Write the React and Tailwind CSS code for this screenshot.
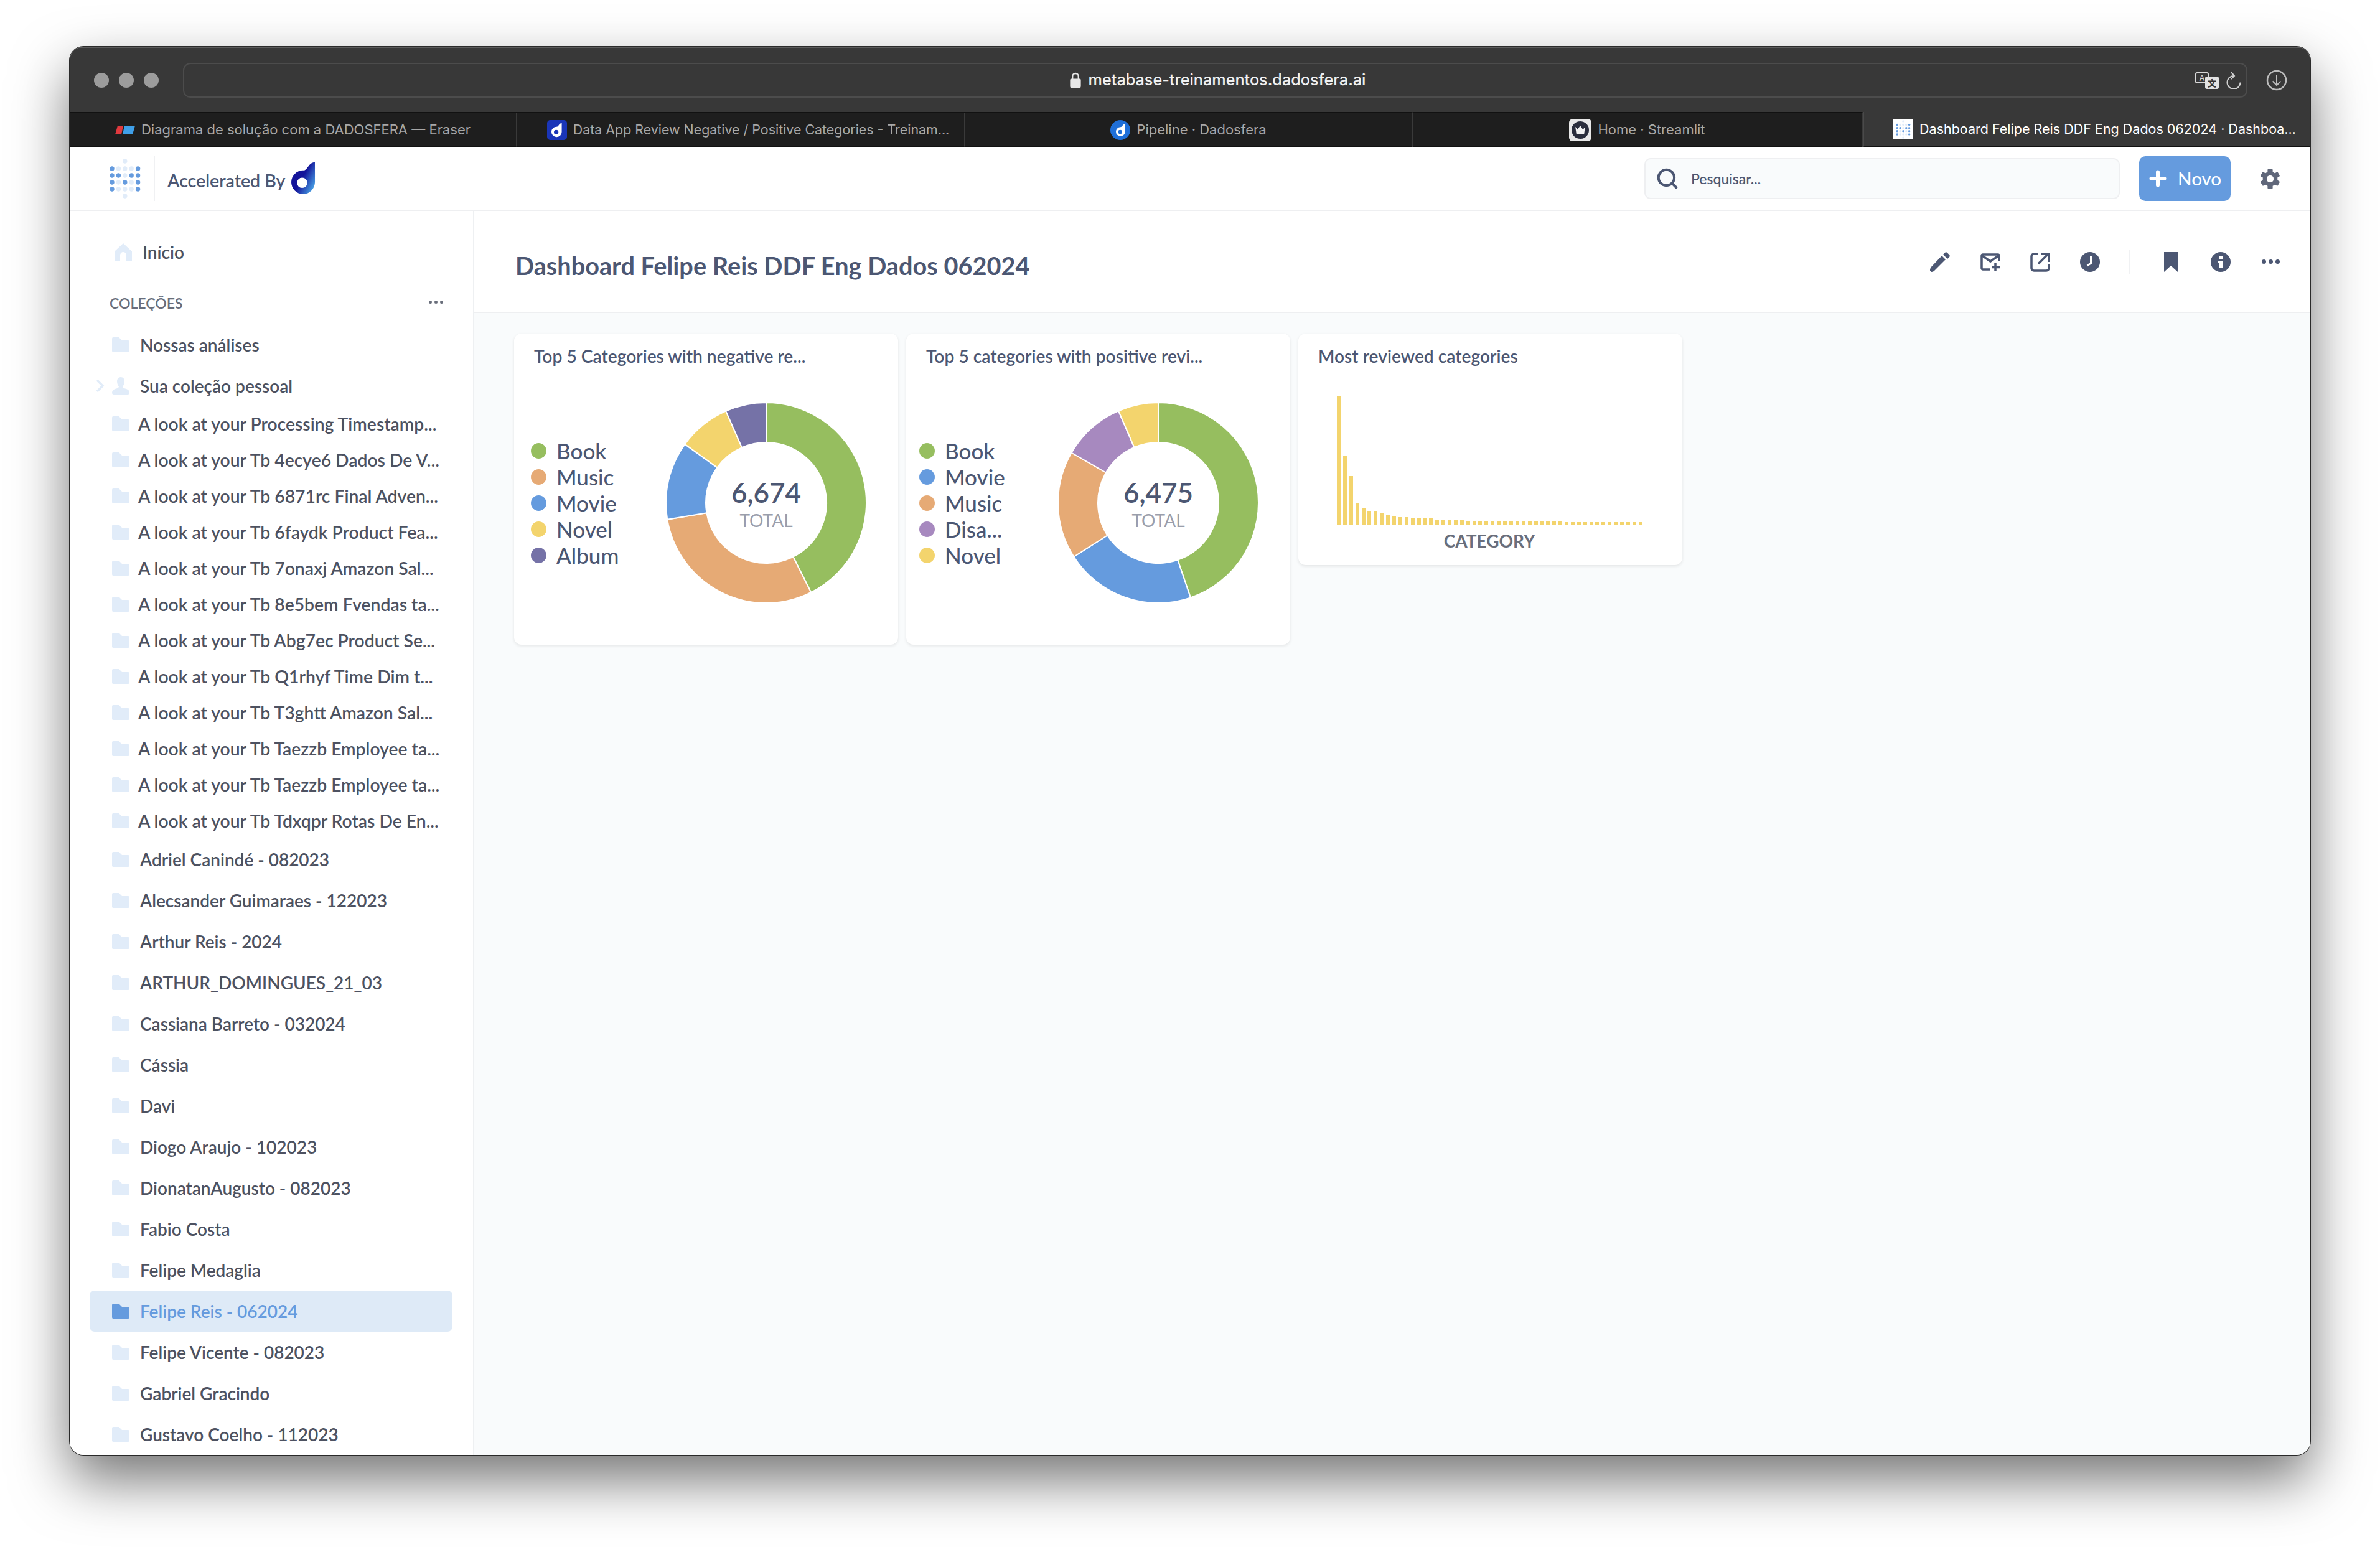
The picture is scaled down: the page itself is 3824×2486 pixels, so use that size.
import React from "react";
import { Search, Plus } from "lucide-react";

const lato = { fontFamily: "Lato, sans-serif" };
const inter = { fontFamily: "Inter, sans-serif" };

const lookRows = [
  "A look at your Processing Timestamp...",
  "A look at your Tb 4ecye6 Dados De V...",
  "A look at your Tb 6871rc Final Adven...",
  "A look at your Tb 6faydk Product Fea...",
  "A look at your Tb 7onaxj Amazon Sal...",
  "A look at your Tb 8e5bem Fvendas ta...",
  "A look at your Tb Abg7ec Product Se...",
  "A look at your Tb Q1rhyf Time Dim t...",
  "A look at your Tb T3ghtt Amazon Sal...",
  "A look at your Tb Taezzb Employee ta...",
  "A look at your Tb Taezzb Employee ta...",
  "A look at your Tb Tdxqpr Rotas De En...",
];

const people = [
  "Adriel Canindé - 082023",
  "Alecsander Guimaraes - 122023",
  "Arthur Reis - 2024",
  "ARTHUR_DOMINGUES_21_03",
  "Cassiana Barreto - 032024",
  "Cássia",
  "Davi",
  "Diogo Araujo - 102023",
  "DionatanAugusto - 082023",
  "Fabio Costa",
  "Felipe Medaglia",
  "Felipe Reis - 062024",
  "Felipe Vicente - 082023",
  "Gabriel Gracindo",
  "Gustavo Coelho - 112023",
];

const GREEN = "#96be5f";
const ORANGE = "#e6aa75";
const BLUE = "#659bde";
const YELLOW = "#f3d46d";
const PURPLE = "#7572a7";
const LILAC = "#a789bf";

const negative = [
  { name: "Book", color: GREEN, end: 153.4 },
  { name: "Music", color: ORANGE, end: 260.4 },
  { name: "Movie", color: BLUE, end: 305.8 },
  { name: "Novel", color: YELLOW, end: 336.3 },
  { name: "Album", color: PURPLE, end: 360 },
];

const positive = [
  { name: "Book", color: GREEN, end: 161.2 },
  { name: "Movie", color: BLUE, end: 237.4 },
  { name: "Music", color: ORANGE, end: 300 },
  { name: "Disa...", color: LILAC, end: 336.6 },
  { name: "Novel", color: YELLOW, end: 360 },
];

const barHeights = [
  206, 110, 78, 34, 26, 22, 22, 18, 16, 14, 12, 12,
  10, 10, 10, 10, 8, 8, 8, 8, 8,
  6, 6, 6, 6, 6, 6, 6, 6, 6, 6, 6, 6, 6, 6, 6, 6,
  4, 4, 4, 4, 4, 4, 4, 4, 4, 4, 4, 4, 4,
];

const FolderIcon = ({ active }) => (
  <svg viewBox="0 0 28 24" className={`w-[28px] h-[24px] shrink-0 ${active ? "text-[#659bde]" : "text-[#e1ecf9]"}`} fill="currentColor">
    <path d="M2 0h9l5 5h10a2 2 0 0 1 2 2v15a2 2 0 0 1-2 2H2a2 2 0 0 1-2-2V2a2 2 0 0 1 2-2z" />
  </svg>
);

// dadosfera "d" mark
const DLogo = ({ className, id, from, to, fill }) => (
  <svg viewBox="0 0 40 52" className={className}>
    {id && (
      <defs>
        <linearGradient id={id} x1="0" y1="0.2" x2="1" y2="0.9">
          <stop offset="0%" stopColor={from} />
          <stop offset="45%" stopColor={from} />
          <stop offset="100%" stopColor={to} />
        </linearGradient>
      </defs>
    )}
    <path
      fillRule="evenodd"
      fill={id ? `url(#${id})` : fill}
      d="M39 0V33A19.500 19.500 0 1 1 19.500 13.500C28 13.500 27 1 39 0ZM18 25.500a8.500 8.500 0 1 0 0 17 8.500 8.500 0 0 0 0-17Z"
    />
  </svg>
);

const dotRows = ["D...D", "DD.DD", "D.D.D", "D...D"];

const DotsLogo = ({ className }) => (
  <svg viewBox="0 0 50 64" className={className}>
    <circle cx="24.800" cy="4" r="3.700" fill="#e1ecf9" />
    <circle cx="24.800" cy="60" r="3.700" fill="#e1ecf9" />
    {dotRows.map((line, row) =>
      line.split("").map((c, col) => (
        <circle
          key={`${row}-${col}`}
          cx={4 + col * 10.4}
          cy={16 + row * 11}
          r="3.700"
          fill={c === "D" ? "#659bde" : "#e1ecf9"}
        />
      ))
    )}
  </svg>
);

const Gear = ({ className }) => (
  <svg viewBox="0 0 32 32" className={className} fill="#60677a">
    <circle cx="16" cy="16" r="11.500" />
    {[0, 60, 120].map((deg) => (
      <rect key={deg} x="12" y="0.500" width="8" height="31" rx="1.500" transform={`rotate(${deg} 16 16)`} />
    ))}
    <circle cx="16" cy="16" r="5.500" fill="#fff" />
  </svg>
);

const Donut = ({ slices, total }) => {
  const cx = 161;
  const cy = 161;
  const outer = 161;
  const inner = 97;
  const pt = (r, deg) => {
    const a = (deg * Math.PI) / 180;
    return `${(cx + r * Math.sin(a)).toFixed(2)} ${(cy - r * Math.cos(a)).toFixed(2)}`;
  };
  let start = 0;
  return (
    <div className="relative w-[322px] h-[322px] shrink-0">
      <svg viewBox="0 0 322 322" className="w-full h-full">
        {slices.map((s) => {
          const large = s.end - start > 180 ? 1 : 0;
          const d = `M${pt(outer, start)}A${outer} ${outer} 0 ${large} 1 ${pt(outer, s.end)}L${pt(inner, s.end)}A${inner} ${inner} 0 ${large} 0 ${pt(inner, start)}Z`;
          start = s.end;
          return <path key={s.name} d={d} fill={s.color} stroke="#fff" strokeWidth="2" />;
        })}
      </svg>
      <div className="absolute inset-0 flex flex-col items-center justify-center">
        <div className="text-[44px] leading-[54px] font-semibold text-[#4c5773]">{total}</div>
        <div className="text-[28px] leading-[34px] text-[#9a9eab] mt-[1px]">TOTAL</div>
      </div>
    </div>
  );
};

const DonutCard = ({ title, slices, total, legendPad }) => (
  <div className="w-[617px] h-[500px] bg-white rounded-[12px] shadow-[0_2px_5px_rgba(0,0,0,0.09)] flex flex-col">
    <div className="pl-[32px] pt-[18px] text-[28.200px] leading-[36px] font-semibold text-[#4c5773]">{title}</div>
    <div className={`flex items-start ${legendPad} mt-[113px]`}>
      <div className="flex flex-col">
        {slices.map((s) => (
          <div key={s.name} className="flex items-center h-[42px] gap-[16px] text-[35px] font-medium text-[#4c5773]">
            <span className="w-[25px] h-[25px] rounded-full shrink-0" style={{ backgroundColor: s.color }} />
            <span>{s.name}</span>
          </div>
        ))}
      </div>
    </div>
    <div className="flex justify-end pr-[51px] mt-[-266px]">
      <Donut slices={slices} total={total} />
    </div>
  </div>
);

const Tab = ({ children, active, textClass = "w-[719px] text-[22px]" }) => (
  <div
    className={`shrink-0 flex items-center justify-center gap-[10px] ${textClass} border-b-2 border-b-[#111] ${
      active ? "text-white bg-[#383838] border-l-2 border-l-[#4a4a4a]" : "text-[#a8a8a8] bg-[#1e1e1e] border-t-2 border-t-[#111] border-r-2 border-r-[#3a3a3a]"
    }`}
    style={inter}
  >
    {children}
  </div>
);

export default function App() {
  return (
    <div className="w-[3824px] h-[2486px] bg-white pt-[75px] pl-[112px] overflow-hidden" style={lato}>
      <div className="w-[3600px] h-[2263px] rounded-[22px] overflow-hidden flex flex-col bg-white shadow-[0_0_0_1px_#2a2a2a,0_40px_90px_rgba(0,0,0,0.55)]">
        {/* browser toolbar */}
        <div className="h-[105px] bg-[#383838] border-t-2 border-t-[#5b5b5b] flex items-center shrink-0">
          <div className="flex items-center gap-[16px] pl-[39px] w-[182px] shrink-0">
            <span className="w-[24px] h-[24px] rounded-full bg-[#9c9c9c]" />
            <span className="w-[24px] h-[24px] rounded-full bg-[#9c9c9c]" />
            <span className="w-[24px] h-[24px] rounded-full bg-[#9c9c9c]" />
          </div>
          <div className="w-[3317px] h-[56px] rounded-[12px] border-2 border-[#4c4c4c] flex items-center relative">
            <div className="flex-1 flex items-center justify-center gap-[12px] text-[25.200px] font-medium text-[#f0f0f0] pl-[8px]" style={inter}>
              <svg viewBox="0 0 18 26" className="w-[18px] h-[25px]">
                <path d="M4 12V7a5 5 0 0 1 10 0v5" fill="none" stroke="#e6e6e6" strokeWidth="2.500" />
                <rect x="0" y="11" width="18" height="15" rx="2" fill="#e6e6e6" />
              </svg>
              <span>metabase-treinamentos.dadosfera.ai</span>
            </div>
            <div className="absolute left-[3231px] top-[13px] w-[38px] h-[28px]">
              <div className="absolute left-0 top-0 w-[22px] h-[18px] rounded-[3px] border-2 border-[#d8d8d8] text-[13px] leading-[14px] text-center text-[#d8d8d8]" style={inter}>A</div>
              <div className="absolute left-[16px] top-[7px] w-[22px] h-[20px] rounded-[3px] bg-[#e2e2e2] text-[14px] leading-[20px] text-center font-bold text-[#333]" style={{ fontFamily: '"Noto Sans CJK SC", sans-serif' }}>文</div>
            </div>
            <svg viewBox="0 0 24 28" className="absolute left-[3281px] top-[12px] w-[24px] h-[28px]" fill="none" stroke="#d0d0d0" strokeWidth="2">
              <path d="M12 7a10.500 10.500 0 1 0 10.500 10.500M8 1l5 6-5 5" />
            </svg>
          </div>
          <svg viewBox="0 0 34 34" className="w-[34px] h-[34px] ml-[30px]" fill="none" stroke="#bdbdbd" strokeWidth="2.500">
            <circle cx="17" cy="17" r="15" />
            <path d="M17 8v17M10.500 18.500L17 25l6.500-6.500" strokeWidth="2" />
          </svg>
        </div>

        {/* tabs */}
        <div className="h-[57px] flex shrink-0">
          <Tab>
            <svg viewBox="0 0 32 14" className="w-[32px] h-[14px]">
              <path d="M4 0h9l-3 14H0z" fill="#e0393e" />
              <path d="M15 0h17l-4 14H12z" fill="#3f9fe8" />
            </svg>
            <span>Diagrama de solução com a DADOSFERA — Eraser</span>
          </Tab>
          <Tab textClass="w-[720px] text-[21.400px] pl-[24px]">
            <span className="w-[32px] h-[32px] rounded-[5px] bg-[#1a35b8] flex items-center justify-center">
              <DLogo className="w-[17px] h-[24px]" fill="#fff" />
            </span>
            <span>Data App Review Negative / Positive Categories - Treinam...</span>
          </Tab>
          <Tab>
            <span className="w-[32px] h-[32px] rounded-full bg-[#1f6fd8] flex items-center justify-center">
              <DLogo className="w-[15px] h-[20px]" fill="#fff" />
            </span>
            <span>Pipeline · Dadosfera</span>
          </Tab>
          <Tab textClass="w-[723px] text-[22px]">
            <span className="w-[36px] h-[36px] rounded-[6px] bg-[#e8e8e8] flex items-center justify-center">
              <span className="w-[28px] h-[28px] rounded-full bg-[#2a2d3c] flex items-center justify-center">
                <svg viewBox="0 0 20 16" className="w-[18px] h-[14px]">
                  <path d="M1 2l4 5 5-7 5 7 4-5-2 14H3z" fill="#f2f2f2" />
                </svg>
              </span>
            </span>
            <span>Home · Streamlit</span>
          </Tab>
          <Tab active textClass="w-[719px] text-[21.500px] pl-[24px]">
            <span className="w-[32px] h-[32px] bg-white flex items-center justify-center">
              <DotsLogo className="w-[24px] h-[30px]" />
            </span>
            <span className="whitespace-nowrap">Dashboard Felipe Reis DDF Eng Dados 062024 · Dashboa...</span>
          </Tab>
        </div>

        {/* metabase header */}
        <div className="h-[102px] bg-white border-b-2 border-b-[#eeeff1] flex items-center shrink-0">
          <div className="flex items-center pl-[64px]">
            <DotsLogo className="w-[50px] h-[64px]" />
            <div className="w-[2px] h-[72px] bg-[#f0f1f3] ml-[21px]" />
            <span className="text-[28.500px] text-[#4c5773] font-semibold ml-[20px] mt-[7px]">Accelerated By</span>
            <DLogo className="w-[39px] h-[52px] ml-[10px] mt-[-2px]" id="dmark" from="#14149a" to="#4fb5f0" />
          </div>
          <div className="ml-auto flex items-center pr-[48px]">
            <div className="w-[764px] h-[66px] rounded-[10px] bg-[#f9fbfc] border-2 border-[#eeeff1] flex items-center pl-[16px] gap-[19px]">
              <Search size={38} strokeWidth={2.600} className="text-[#4c5773]" />
              <span className="text-[23px] font-medium text-[#4c5773]">Pesquisar...</span>
            </div>
            <div className="w-[147px] h-[72px] rounded-[10px] bg-[#659bde] ml-[31px] flex items-center pl-[12px] gap-[14px] text-white text-[29.500px] font-medium">
              <Plus size={36} strokeWidth={4} />
              <span>Novo</span>
            </div>
            <Gear className="w-[33px] h-[33px] ml-[47px]" />
          </div>
        </div>

        <div className="flex-1 flex min-h-0">
          {/* sidebar */}
          <aside className="w-[650px] shrink-0 bg-white border-r-2 border-r-[#eef0f2] overflow-hidden pt-[33px] pl-[32px]">
            <div className="h-[66px] flex items-center pl-[40px] gap-[17px] text-[28px] font-semibold text-[#4d5261]">
              <svg viewBox="0 0 28 28" className="w-[28px] h-[28px] shrink-0 text-[#e1ecf9]" fill="currentColor">
                <path d="M14 0l14 13v15h-9v-9a5 5 0 0 0-10 0v9H0V13z" />
              </svg>
              <span>Início</span>
            </div>
            <div className="h-[50px] mt-[24px] flex items-center justify-between pl-[32px] pr-[48px]">
              <span className="text-[23px] text-[#696e7b] font-semibold">COLEÇÕES</span>
              <span className="flex gap-[4px] mt-[-4px]">
                <i className="w-[5px] h-[5px] rounded-full bg-[#696e7b]" />
                <i className="w-[5px] h-[5px] rounded-full bg-[#696e7b]" />
                <i className="w-[5px] h-[5px] rounded-full bg-[#696e7b]" />
              </span>
            </div>
            <div className="h-[66px] mt-[9px] flex items-center pl-[36px] gap-[17px] text-[28px] font-semibold text-[#4d5261]">
              <FolderIcon />
              <span>Nossas análises</span>
            </div>
            <div className="h-[65px] flex items-center pl-[36px] gap-[17px] text-[28px] font-semibold text-[#4d5261] relative">
              <svg viewBox="0 0 14 22" className="absolute left-[10px] w-[14px] h-[22px] text-[#e1ecf9]" fill="none" stroke="currentColor" strokeWidth="3.500">
                <path d="M2 2l9 9-9 9" />
              </svg>
              <svg viewBox="0 0 28 28" className="w-[28px] h-[28px] shrink-0 text-[#e1ecf9]" fill="currentColor">
                <path d="M14 0c4 0 6 3 6 7s-2 7-3 8c0 2 2 3 6 4 3 1 5 3 5 6 0 2-1 3-3 3H3c-2 0-3-1-3-3 0-3 2-5 5-6 4-1 6-2 6-4-1-1-3-4-3-8s2-7 6-7z" />
              </svg>
              <span>Sua coleção pessoal</span>
            </div>
            {lookRows.map((row, i) => (
              <div key={i} className="h-[58px] flex items-center pl-[36px] gap-[14px] text-[28.300px] font-semibold text-[#4d5261]">
                <FolderIcon />
                <span className="whitespace-nowrap">{row}</span>
              </div>
            ))}
            <div className="pr-[33px]">
              {people.map((name) => {
                const active = name === "Felipe Reis - 062024";
                return (
                  <div
                    key={name}
                    className={`h-[66px] flex items-center pl-[36px] gap-[17px] text-[28px] font-semibold rounded-[8px] ${
                      active ? "bg-[#deeaf7] text-[#659bde]" : "text-[#4d5261]"
                    }`}
                  >
                    <FolderIcon active={active} />
                    <span>{name}</span>
                  </div>
                );
              })}
            </div>
          </aside>

          {/* dashboard */}
          <main className="flex-1 bg-[#f9fbfc] min-w-0">
            <div className="h-[164px] bg-white border-b-2 border-b-[#eeeff1] flex items-center pl-[66px] pr-[48px]">
              <h1 className="text-[39.700px] font-bold text-[#4c5773] mt-[14px]">Dashboard Felipe Reis DDF Eng Dados 062024</h1>
              <div className="ml-auto flex items-center text-[#4c5773] mt-[1px]">
                <svg viewBox="0 0 32 32" className="w-[32px] h-[32px]" fill="currentColor">
                  <path d="M0 28l1-3L19 6l6 6L6 31l-3 1a3 3 0 0 1-3-4zM21 4l3-3a2.500 2.500 0 0 1 3.500 0l3.500 3.500a2.500 2.500 0 0 1 0 3.500l-3 3z" />
                </svg>
                <svg viewBox="0 0 32 32" className="w-[32px] h-[32px] ml-[49px]" fill="none" stroke="currentColor" strokeWidth="3.500">
                  <path d="M15 28H4a2 2 0 0 1-2-2V6a2 2 0 0 1 2-2h24a2 2 0 0 1 2 2v9" />
                  <path d="M3 6l13 9 13-9" />
                  <path d="M24 18v13M18 24.500h13" />
                </svg>
                <svg viewBox="0 0 32 32" className="w-[32px] h-[32px] ml-[48px]" fill="none" stroke="currentColor" strokeWidth="3.500">
                  <path d="M12 3H6a4 4 0 0 0-4 4v19a4 4 0 0 0 4 4h20a4 4 0 0 0 4-4v-7" />
                  <path d="M13 19L28 4M17 3h13v13" />
                </svg>
                <svg viewBox="0 0 32 32" className="w-[32px] h-[32px] ml-[48px]">
                  <circle cx="16" cy="16" r="16" fill="currentColor" />
                  <path d="M17.500 7v11l-6 4" fill="none" stroke="#fff" strokeWidth="3" />
                </svg>
                <div className="w-[2px] h-[40px] bg-[#f0f1f3] ml-[47px]" />
                <svg viewBox="0 0 32 32" className="w-[32px] h-[32px] ml-[49px]" fill="currentColor">
                  <path d="M5 0h22v32L16 22 5 32z" />
                </svg>
                <svg viewBox="0 0 32 32" className="w-[32px] h-[32px] ml-[48px]" fill="currentColor">
                  <path fillRule="evenodd" d="M16 0a16 16 0 1 1 0 32 16 16 0 0 1 0-32zm-3 6v5h6V6zm-2 8v3h2v9h6V14z" />
                </svg>
                <div className="flex gap-[4px] ml-[48px] w-[32px] justify-center">
                  <i className="w-[7px] h-[7px] rounded-full bg-[#4c5773]" />
                  <i className="w-[7px] h-[7px] rounded-full bg-[#4c5773]" />
                  <i className="w-[7px] h-[7px] rounded-full bg-[#4c5773]" />
                </div>
              </div>
            </div>

            <div className="flex items-start gap-[13px] pl-[64px] pt-[33px]">
              <DonutCard title="Top 5 Categories with negative re..." slices={negative} total="6,674" legendPad="pl-[27px]" />
              <DonutCard title="Top 5 categories with positive revi..." slices={positive} total="6,475" legendPad="pl-[21px]" />
              <div className="w-[617px] h-[372px] bg-white rounded-[12px] shadow-[0_2px_5px_rgba(0,0,0,0.09)] flex flex-col">
                <div className="pl-[32px] pt-[18px] text-[28.200px] leading-[36px] font-semibold text-[#4c5773]">Most reviewed categories</div>
                <div className="flex items-end gap-[3.900px] h-[206px] ml-[62px] mt-[47px]">
                  {barHeights.map((h, i) => (
                    <div key={i} className="w-[6px] bg-[#f3d46d]" style={{ height: h }} />
                  ))}
                </div>
                <div className="text-center ml-[62px] w-[490px] text-[28px] leading-[36px] font-bold text-[#696e7b] mt-[8px]">CATEGORY</div>
              </div>
            </div>
          </main>
        </div>
      </div>
    </div>
  );
}
